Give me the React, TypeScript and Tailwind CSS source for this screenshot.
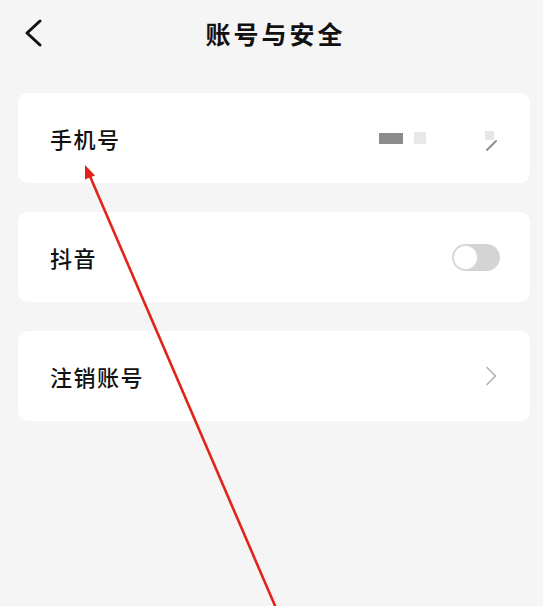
import { ReactNode } from "react";

const font = { fontFamily: '"Noto Sans CJK SC", "Noto Sans", sans-serif' };

const Chevron = ({ className = "" }: { className?: string }) => (
  <svg width="12" height="20" viewBox="0 0 12 20" className={className} fill="none">
    <path d="M2 1.5 L10.5 10 L2 18.5" stroke="#b4b4b4" strokeWidth="1.6" strokeLinecap="round" strokeLinejoin="round" />
  </svg>
);

const Card = ({ children }: { children: ReactNode }) => (
  <div className="h-[90px] rounded-[10px] bg-white flex items-center justify-between pl-[32px]">{children}</div>
);

const Label = ({ text }: { text: string }) => (
  <span className="text-[22px] font-medium tracking-[1.5px] text-[#111] leading-none">{text}</span>
);

export default function App() {
  return (
    <div className="relative w-full min-h-[606px] bg-[#f5f5f5] overflow-hidden" style={font}>
      <header className="h-[66px] grid grid-cols-[1fr_auto_1fr] items-center">
        <div className="pl-[24px] flex items-center">
          <svg width="20" height="30" viewBox="0 0 20 30" fill="none">
            <path d="M16 3 L3 15 L16 27" stroke="#111" strokeWidth="3" strokeLinecap="round" strokeLinejoin="round" />
          </svg>
        </div>
        <h1 className="text-[25px] font-bold tracking-[3px] text-[#111] leading-none ml-[8px]">账号与安全</h1>
        <div />
      </header>

      <div className="pt-[27px] ml-[18px] mr-[13px] flex flex-col gap-[29px]">
        <Card>
          <Label text="手机号" />
          <div className="flex items-center pr-[33px]">
            <div className="w-[24px] h-[11px] bg-[#8c8c8c]" />
            <div className="ml-[11px] w-[12px] h-[12px] bg-[#e8e8e8]" />
            <svg width="12" height="20" viewBox="0 0 12 20" className="ml-[59px] mt-[6px]" fill="none">
              <rect x="0" y="0" width="9" height="9" fill="#e6e6e6" />
              <path d="M2 19 L11 10" stroke="#8a8a8a" strokeWidth="1.8" strokeLinecap="round" />
            </svg>
          </div>
        </Card>

        <Card>
          <Label text="抖音" />
          <div className="mr-[30px] w-[48px] h-[27px] rounded-full bg-[#d4d4d4] flex items-center pl-[1px]">
            <div className="w-[25px] h-[25px] rounded-full bg-white border border-[#dcdcdc]" />
          </div>
        </Card>

        <Card>
          <Label text="注销账号" />
          <Chevron className="mr-[33px]" />
        </Card>
      </div>

      <svg className="absolute inset-0 pointer-events-none" width="543" height="606" viewBox="0 0 543 606">
        <line x1="276" y1="608" x2="89" y2="174" stroke="#e2231a" strokeWidth="2.6" />
        <polygon points="85,165 95,175.5 85,179.5" fill="#e2231a" />
      </svg>
    </div>
  );
}
